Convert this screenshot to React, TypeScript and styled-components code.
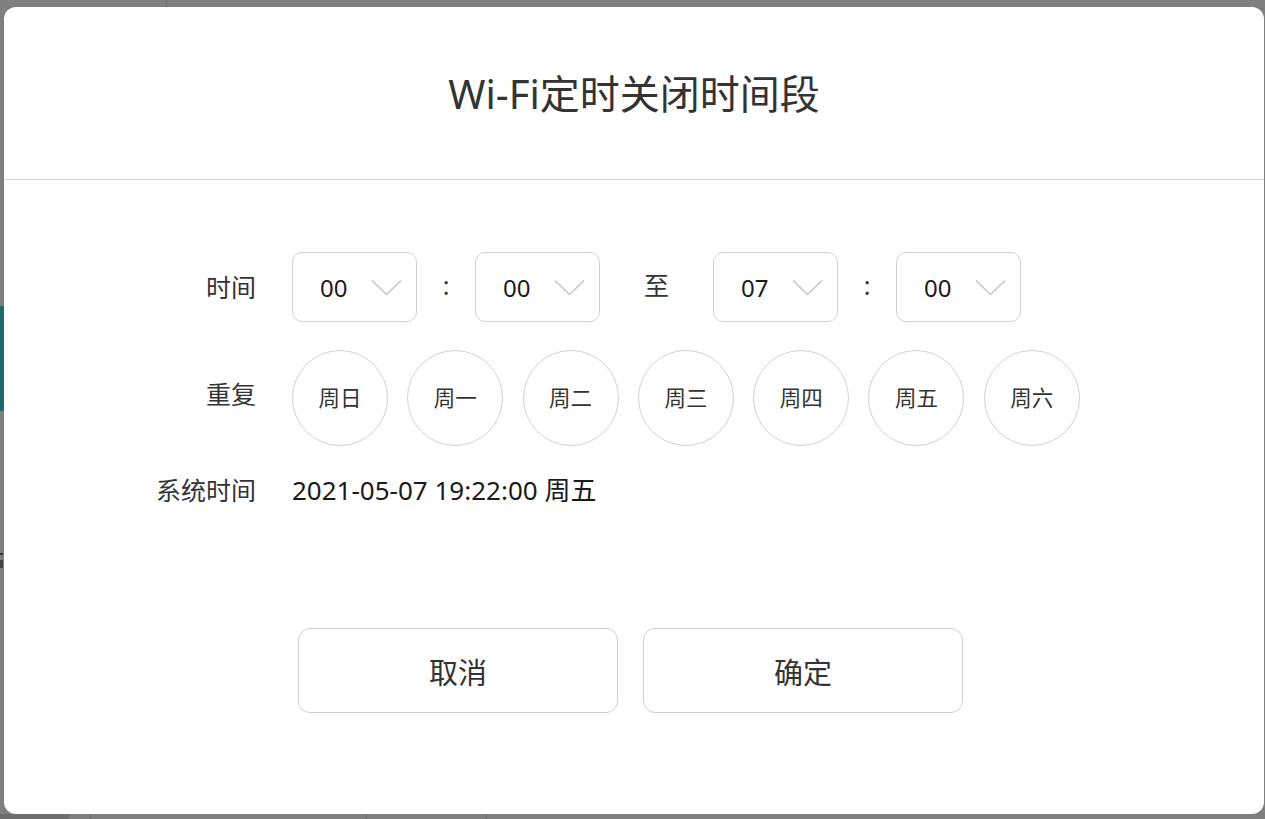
import React from "react";
import styled, { createGlobalStyle } from "styled-components";

const GlobalStyle = createGlobalStyle`
  html, body { margin: 0; padding: 0; }
  body {
    width: 1265px;
    height: 819px;
    overflow: hidden;
    background: #7f7f7f;
    font-family: "Noto Sans", "Noto Sans CJK SC", sans-serif;
  }
`;

const Page = styled.div`
  position: relative;
  width: 1265px;
  height: 819px;
  background: #7f7f7f;
  overflow: hidden;
`;

const MaskDetail = styled.div<{ $x: number; $y: number; $w: number; $h: number; $c: string }>`
  position: absolute;
  left: ${(p) => p.$x}px;
  top: ${(p) => p.$y}px;
  width: ${(p) => p.$w}px;
  height: ${(p) => p.$h}px;
  background: ${(p) => p.$c};
`;

const Dialog = styled.div`
  position: absolute;
  left: 4px;
  top: 7px;
  width: 1260px;
  height: 807px;
  background: #fff;
  border-radius: 12px;
  display: flex;
  flex-direction: column;
`;

const Header = styled.div`
  height: 172px;
  border-bottom: 1px solid #d6d6d6;
  display: flex;
  align-items: center;
  justify-content: center;
`;

const Title = styled.h1`
  margin: 0;
  font-size: 40px;
  font-weight: 400;
  color: #333;
  line-height: 1;
  padding-top: 2px;
`;

const Body = styled.div`
  padding: 72px 0 0 0;
  display: flex;
  flex-direction: column;
`;

const Row = styled.div<{ $mt: number }>`
  display: flex;
  align-items: center;
  margin-top: ${(p) => p.$mt}px;
`;

const Label = styled.div<{ $lift?: number }>`
  width: 288px;
  padding-right: 36px;
  box-sizing: border-box;
  text-align: right;
  font-size: 25px;
  color: #333;
  line-height: 30px;
  flex-shrink: 0;
  margin-bottom: ${(p) => (p.$lift ?? 0)}px;
`;

const SelectBox = styled.div`
  width: 125px;
  height: 70px;
  box-sizing: border-box;
  border: 1px solid #d2d2d2;
  border-radius: 10px;
  display: flex;
  align-items: center;
  justify-content: space-between;
  padding: 0 14px 0 27px;
  font-size: 24px;
  color: #1a1a1a;
`;

const Sep = styled.div<{ $w: number }>`
  width: ${(p) => p.$w}px;
  text-align: center;
  font-size: 25px;
  color: #333;
  line-height: 30px;
  margin-bottom: 4px;
`;

const Days = styled.div`
  display: flex;
  gap: 19.3px;
`;

const Day = styled.div`
  width: 96px;
  height: 96px;
  box-sizing: border-box;
  border: 1px solid #d2d2d2;
  border-radius: 50%;
  display: flex;
  align-items: center;
  justify-content: center;
  padding-bottom: 4px;
  font-size: 21.5px;
  color: #333;
`;

const SysTime = styled.div`
  font-size: 26px;
  color: #1a1a1a;
  line-height: 30px;
`;

const Footer = styled.div`
  display: flex;
  justify-content: center;
  gap: 25px;
  margin-top: 123px;
  padding-right: 7px;
`;

const Button = styled.button`
  width: 320px;
  height: 85px;
  box-sizing: border-box;
  border: 1px solid #cfcfcf;
  border-radius: 12px;
  background: #fff;
  font-family: "Noto Sans", "Noto Sans CJK SC", sans-serif;
  font-size: 29px;
  color: #333;
  cursor: pointer;
`;

const Chevron = () => (
  <svg width="31" height="17" viewBox="0 0 31 17" fill="none">
    <polyline points="1,1.5 15.5,15.5 30,1.5" stroke="#c6c6c6" strokeWidth="1.6" fill="none" />
  </svg>
);

const Select = ({ value }: { value: string }) => (
  <SelectBox>
    <span>{value}</span>
    <Chevron />
  </SelectBox>
);

const days = ["周日", "周一", "周二", "周三", "周四", "周五", "周六"];

export default function App() {
  return (
    <>
      <GlobalStyle />
      <Page>
        <MaskDetail $x={166} $y={0} $w={1} $h={7} $c="#6a6a6a" />
        <MaskDetail $x={0} $y={306} $w={4} $h={105} $c="#1c6a6a" />
        <MaskDetail $x={0} $y={553} $w={3} $h={2} $c="#333" />
        <MaskDetail $x={0} $y={560} $w={3} $h={8} $c="#444" />
        <MaskDetail $x={0} $y={814} $w={69} $h={5} $c="#6e6e6e" />
        <MaskDetail $x={90} $y={814} $w={1} $h={5} $c="#6a6a6a" />
        <MaskDetail $x={366} $y={814} $w={1} $h={5} $c="#6a6a6a" />
        <MaskDetail $x={486} $y={814} $w={1} $h={5} $c="#6a6a6a" />
        <Dialog>
          <Header>
            <Title>Wi-Fi定时关闭时间段</Title>
          </Header>
          <Body>
            <Row $mt={0}>
              <Label>时间</Label>
              <Select value="00" />
              <Sep $w={58}>:</Sep>
              <Select value="00" />
              <Sep $w={113}>至</Sep>
              <Select value="07" />
              <Sep $w={58}>:</Sep>
              <Select value="00" />
            </Row>
            <Row $mt={28}>
              <Label $lift={8}>重复</Label>
              <Days>
                {days.map((d) => (
                  <Day key={d}>{d}</Day>
                ))}
              </Days>
            </Row>
            <Row $mt={29}>
              <Label>系统时间</Label>
              <SysTime>2021-05-07 19:22:00 周五</SysTime>
            </Row>
          </Body>
          <Footer>
            <Button>取消</Button>
            <Button>确定</Button>
          </Footer>
        </Dialog>
      </Page>
    </>
  );
}
